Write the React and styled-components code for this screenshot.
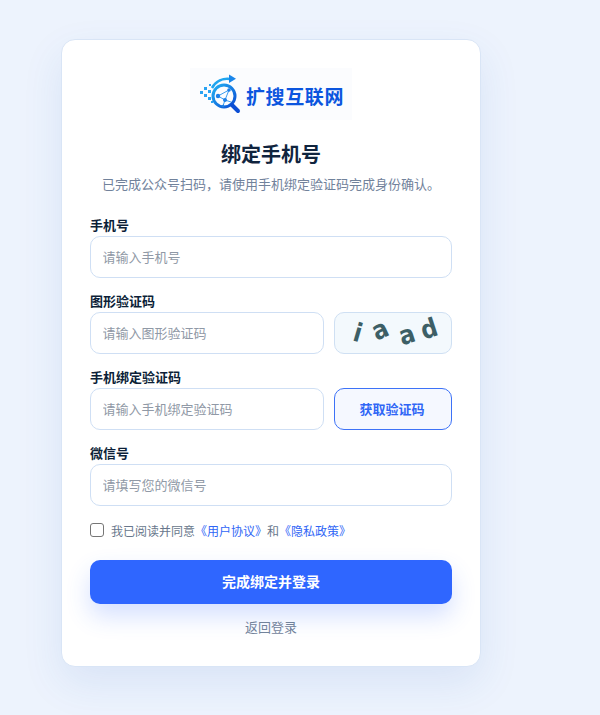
import React from "react";
import styled, { createGlobalStyle } from "styled-components";

const GlobalStyle = createGlobalStyle`
  html, body {
    margin: 0;
    padding: 0;
    height: 100%;
    overflow: hidden;
    background: #edf3fd;
    font-family: Inter, "Noto Sans CJK SC", "Liberation Sans", sans-serif;
  }
  * {
    box-sizing: border-box;
  }
`;

const Page = styled.div`
  padding: 39px 0 0 61px;
`;

const Card = styled.div`
  width: 420px;
  height: 628px;
  padding: 28px 28px 0;
  background: #fff;
  border: 1px solid #d9e5f6;
  border-radius: 14px;
  box-shadow: 0 16px 40px rgba(37, 99, 190, 0.1);
`;

const LogoWrap = styled.div`
  display: flex;
  justify-content: center;
  margin-bottom: 20px;
`;

const Logo = styled.div`
  width: 162px;
  height: 52px;
  background: #fbfcfe;
  display: flex;
  align-items: center;
  padding: 3px 0 0 9px;
`;

const LogoText = styled.span`
  font-size: 19px;
  font-weight: 700;
  color: #0b55de;
  letter-spacing: 0.6px;
  white-space: nowrap;
`;

const Title = styled.h1`
  margin: 0;
  font-size: 20px;
  line-height: 30px;
  font-weight: 700;
  color: #10243e;
  text-align: center;
`;

const Subtitle = styled.p`
  margin: 4px 0 22px;
  font-size: 13px;
  line-height: 20px;
  color: #71829b;
  text-align: center;
`;

const Field = styled.div`
  margin-bottom: 14px;
`;

const Label = styled.label`
  display: block;
  margin-bottom: 2px;
  font-size: 13px;
  line-height: 18px;
  font-weight: 600;
  color: #0c1f38;
`;

const Row = styled.div`
  display: flex;
  gap: 10px;
`;

const Input = styled.input`
  flex: 1;
  display: block;
  width: ${(p) => (p.$short ? "234px" : "100%")};
  min-width: 0;
  height: 42px;
  padding: 0 11.5px;
  font: inherit;
  font-size: 13px;
  color: #10243e;
  background: #fff;
  border: 1px solid #cfdff4;
  border-radius: 10px;
  outline: none;

  &::placeholder {
    color: #9099a6;
    opacity: 1;
  }
`;

const Captcha = styled.div`
  flex: none;
  width: 118px;
  height: 42px;
  display: flex;
  align-items: center;
  justify-content: center;
  background: #f3f9fd;
  border: 1px solid #cfe0f3;
  border-radius: 10px;
`;

const CaptchaChar = styled.span`
  display: inline-block;
  width: 20px;
  margin-left: ${(p) => p.$gap}px;
  font-family: "DejaVu Sans", sans-serif;
  font-size: 24px;
  font-weight: 700;
  line-height: 1;
  text-align: center;
  color: #3d5f66;
  transform: translateY(${(p) => p.$y}px) rotate(${(p) => p.$rotate}deg) scale(0.95, 1.08);
`;

const CodeButton = styled.button`
  flex: none;
  width: 118px;
  height: 42px;
  padding: 0 2px 2px 0;
  font: inherit;
  font-size: 13px;
  font-weight: 600;
  color: #2f66f6;
  background: #f5f8ff;
  border: 1px solid #3d72f7;
  border-radius: 10px;
`;

const Agreement = styled.label`
  display: flex;
  align-items: center;
  margin-top: 15px;
  height: 18px;
  font-size: 12px;
  color: #68778c;
`;

const Check = styled.input`
  width: 14px;
  height: 14px;
  margin: 0 7px 0 0;
  appearance: none;
  background: #fff;
  border: 1px solid #767676;
  border-radius: 3px;
`;

const TermLink = styled.a`
  color: #2f66f6;
`;

const Submit = styled.button`
  display: block;
  width: 100%;
  height: 44px;
  margin-top: 21px;
  padding: 0 0 2px;
  font: inherit;
  font-size: 14px;
  font-weight: 700;
  color: #fff;
  background: #2f66ff;
  border: none;
  border-radius: 10px;
  box-shadow: 0 12px 24px rgba(47, 102, 255, 0.2);
`;

const Back = styled.div`
  margin-top: 13px;
  font-size: 13px;
  line-height: 20px;
  color: #71829b;
  text-align: center;
`;

const LogoIcon = () => (
  <svg width="47" height="44" viewBox="0 0 47 44" fill="none">
    <defs>
      <linearGradient id="ring" x1="0" y1="0" x2="1" y2="1">
        <stop offset="0" stopColor="#22b0f2" />
        <stop offset="1" stopColor="#0a4dd4" />
      </linearGradient>
    </defs>
    <g fill="#2aa3f2">
      <rect x="1" y="17" width="3" height="3" />
      <rect x="5" y="13" width="3" height="3" />
      <rect x="5" y="20" width="3" height="3" />
      <rect x="9" y="16" width="3" height="3" />
      <rect x="9" y="23" width="3" height="3" />
      <rect x="10" y="10" width="2" height="2" />
      <rect x="12" y="27" width="2" height="2" />
    </g>
    <path d="M13 14 C17 7 24 4 31 5" stroke="#1fa5ef" strokeWidth="2.6" />
    <path d="M30 0.5 L37 4.8 L30 9 Z" fill="#1a86ea" />
    <circle cx="25" cy="22" r="11" stroke="url(#ring)" strokeWidth="3" />
    <path d="M33 31 L39 37" stroke="#0a4dd4" strokeWidth="4" strokeLinecap="round" />
    <path d="M19 22 L30 16 L26 26 Z M26 26 L32 28 M26 26 L24 32" stroke="#3a9cf0" strokeWidth="1" />
    <g fill="#1b7fe8">
      <circle cx="19" cy="22" r="2.2" />
      <circle cx="30" cy="16" r="1.8" />
      <circle cx="26" cy="26" r="2" />
      <circle cx="24" cy="32" r="1.3" />
    </g>
  </svg>
);

const App = () => (
  <>
    <GlobalStyle />
    <Page>
      <Card>
        <LogoWrap>
          <Logo>
            <LogoIcon />
            <LogoText>扩搜互联网</LogoText>
          </Logo>
        </LogoWrap>
        <Title>绑定手机号</Title>
        <Subtitle>已完成公众号扫码，请使用手机绑定验证码完成身份确认。</Subtitle>
        <Field>
          <Label>手机号</Label>
          <Input placeholder="请输入手机号" />
        </Field>
        <Field>
          <Label>图形验证码</Label>
          <Row>
            <Input $short placeholder="请输入图形验证码" />
            <Captcha>
              <CaptchaChar $gap={0} $y={0} $rotate={16}>i</CaptchaChar>
              <CaptchaChar $gap={2} $y={-3} $rotate={-25}>a</CaptchaChar>
              <CaptchaChar $gap={7} $y={2} $rotate={-18}>a</CaptchaChar>
              <CaptchaChar $gap={2} $y={-4} $rotate={-18}>d</CaptchaChar>
            </Captcha>
          </Row>
        </Field>
        <Field>
          <Label>手机绑定验证码</Label>
          <Row>
            <Input $short placeholder="请输入手机绑定验证码" />
            <CodeButton type="button">获取验证码</CodeButton>
          </Row>
        </Field>
        <Field>
          <Label>微信号</Label>
          <Input placeholder="请填写您的微信号" />
        </Field>
        <Agreement>
          <Check type="checkbox" />
          <span>
            我已阅读并同意<TermLink>《用户协议》</TermLink>和<TermLink>《隐私政策》</TermLink>
          </span>
        </Agreement>
        <Submit type="button">完成绑定并登录</Submit>
        <Back>返回登录</Back>
      </Card>
    </Page>
  </>
);

export default App;
